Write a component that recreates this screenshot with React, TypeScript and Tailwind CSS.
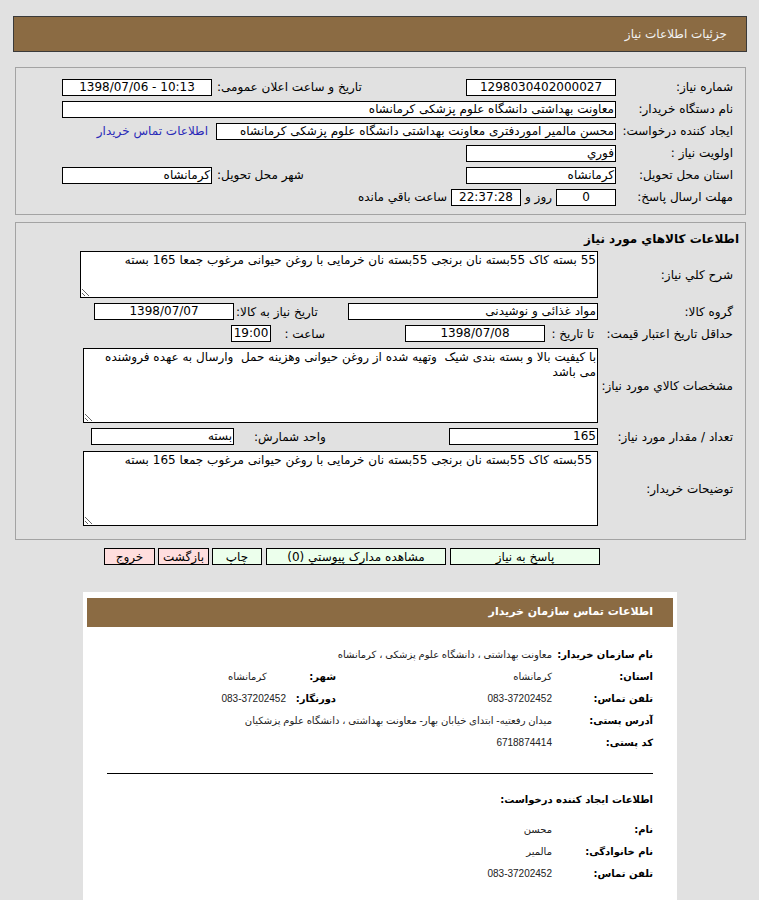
import React from "react";

function Box({
  w,
  center,
  children,
}: {
  w: string;
  center?: boolean;
  children?: React.ReactNode;
}) {
  return (
    <div
      className={`${w} h-[17px] shrink-0 border border-black bg-white flex items-center ${
        center ? "justify-center" : "justify-start"
      } px-[1px] overflow-hidden whitespace-nowrap text-[12px] leading-[15px] text-black`}
    >
      {children}
    </div>
  );
}

function Area({ w, h, text }: { w: string; h: string; text: string }) {
  return (
    <textarea
      readOnly
      defaultValue={text}
      className={`${w} ${h} shrink-0 border border-black bg-white text-[12px] leading-[15px] px-[1px] py-[1px] text-black outline-none resize-y`}
    />
  );
}

function CardRow({
  label,
  value,
  label2,
  value2,
}: {
  label: string;
  value: string;
  label2?: string;
  value2?: string;
}) {
  return (
    <div className="h-[22px] flex items-center text-[10px]">
      <div className="w-[101px] shrink-0 font-bold text-black whitespace-nowrap">{label}</div>
      <div className="w-[216px] shrink-0 text-[#222] whitespace-nowrap font-['Liberation_Sans','DejaVu_Sans',sans-serif]">
        {value}
      </div>
      {label2 && (
        <>
          <div className="w-[50px] shrink-0 font-bold text-black whitespace-nowrap">{label2}</div>
          <div className="w-[58px] shrink-0 text-left text-[#222] whitespace-nowrap font-['Liberation_Sans','DejaVu_Sans',sans-serif]">
            {value2}
          </div>
        </>
      )}
    </div>
  );
}

export default function App() {
  return (
    <div
      dir="rtl"
      className="w-[759px] min-h-[900px] bg-[#e1e1e1] pt-[16px] font-['DejaVu_Sans',sans-serif] text-[12px] text-black overflow-hidden"
    >
      {/* header */}
      <div className="mr-[12px] w-[734px] h-[36px] bg-[#8b6b43] border border-[#3a3a3a] flex items-center pr-[19px] text-[12px] text-[#f2f2f2]">
        جزئیات اطلاعات نیاز
      </div>

      {/* panel 1 */}
      <div className="mr-[13px] w-[731px] mt-[15px] border border-[#a3a3a3] pt-[8px] pb-[6px] pr-[12px]">
        <div className="h-[22px] flex items-center">
          <div className="w-[117px] shrink-0 whitespace-nowrap">شماره نیاز:</div>
          <Box w="w-[150px]" center>
            1298030402000027
          </Box>
          <div className="w-[254px] shrink-0 text-left pl-[5px] whitespace-nowrap">تاریخ و ساعت اعلان عمومی:</div>
          <Box w="w-[150px]" center>
            <span dir="ltr">1398/07/06 - 10:13</span>
          </Box>
        </div>
        <div className="h-[22px] flex items-center">
          <div className="w-[117px] shrink-0 whitespace-nowrap">نام دستگاه خریدار:</div>
          <Box w="w-[554px]">معاونت بهداشتی دانشگاه علوم پزشکی کرمانشاه</Box>
        </div>
        <div className="h-[22px] flex items-center">
          <div className="w-[117px] shrink-0 whitespace-nowrap">ایجاد کننده درخواست:</div>
          <Box w="w-[400px]">محسن مالمیر اموردفتری معاونت بهداشتی دانشگاه علوم پزشکی کرمانشاه</Box>
          <a className="mr-[8px] text-[#2a2ab8] whitespace-nowrap cursor-pointer">اطلاعات تماس خریدار</a>
        </div>
        <div className="h-[22px] flex items-center">
          <div className="w-[117px] shrink-0 whitespace-nowrap">اولویت نیاز :</div>
          <Box w="w-[150px]">فوري</Box>
        </div>
        <div className="h-[22px] flex items-center">
          <div className="w-[117px] shrink-0 whitespace-nowrap">استان محل تحویل:</div>
          <Box w="w-[150px]">کرمانشاه</Box>
          <div className="w-[254px] shrink-0 text-left pl-[5px] whitespace-nowrap">شهر محل تحویل:</div>
          <Box w="w-[150px]">کرمانشاه</Box>
        </div>
        <div className="h-[22px] flex items-center">
          <div className="w-[117px] shrink-0 whitespace-nowrap">مهلت ارسال پاسخ:</div>
          <Box w="w-[60px]" center>
            0
          </Box>
          <div className="mr-[4px] whitespace-nowrap">روز و</div>
          <div className="mr-[4px]">
            <Box w="w-[70px]" center>
              22:37:28
            </Box>
          </div>
          <div className="mr-[4px] whitespace-nowrap">ساعت باقي مانده</div>
        </div>
      </div>

      {/* panel 2 */}
      <div className="mr-[13px] w-[731px] mt-[7px] border border-[#a3a3a3] pt-[8px] pb-[13px] pr-[12px]">
        <div className="h-[16px] flex items-center -mr-[6px] font-bold whitespace-nowrap">اطلاعات كالاهاي مورد نیاز</div>
        <div className="mt-[4px] flex items-center">
          <div className="w-[135px] shrink-0 whitespace-nowrap">شرح کلي نیاز:</div>
          <Area
            w="w-[518px]"
            h="h-[47px]"
            text="55 بسته کاک 55بسته نان برنجی 55بسته نان خرمایی با روغن حیوانی مرغوب جمعا 165 بسته"
          />
        </div>
        <div className="mt-[5px] h-[17px] flex items-center">
          <div className="w-[135px] shrink-0 whitespace-nowrap">گروه کالا:</div>
          <Box w="w-[250px]">مواد غذائی و نوشیدنی</Box>
          <div className="w-[114px] shrink-0 text-left pl-[2px] whitespace-nowrap">تاریخ نیاز به کالا:</div>
          <Box w="w-[140px]" center>
            1398/07/07
          </Box>
        </div>
        <div className="mt-[5px] h-[17px] flex items-center">
          <div className="w-[135px] shrink-0 whitespace-nowrap">حداقل تاریخ اعتبار قیمت:</div>
          <div className="w-[53px] shrink-0 pr-[4px] whitespace-nowrap">تا تاریخ :</div>
          <Box w="w-[140px]" center>
            1398/07/08
          </Box>
          <div className="w-[134px] shrink-0 pr-[80px] whitespace-nowrap">ساعت :</div>
          <Box w="w-[40px]" center>
            19:00
          </Box>
        </div>
        <div className="mt-[6px] flex items-center">
          <div className="w-[135px] shrink-0 whitespace-nowrap">مشخصات کالاي مورد نیاز:</div>
          <Area
            w="w-[515px]"
            h="h-[75px]"
            text="با کیفیت بالا و بسته بندی شیک  وتهیه شده از روغن حیوانی وهزینه حمل  وارسال به عهده فروشنده می باشد"
          />
        </div>
        <div className="mt-[5px] h-[17px] flex items-center">
          <div className="w-[135px] shrink-0 whitespace-nowrap">تعداد / مقدار مورد نیاز:</div>
          <Box w="w-[149px]">165</Box>
          <div className="w-[215px] shrink-0 text-left pl-[20px] whitespace-nowrap">واحد شمارش:</div>
          <Box w="w-[143px]">بسته</Box>
        </div>
        <div className="mt-[6px] flex items-center">
          <div className="w-[135px] shrink-0 whitespace-nowrap">توضیحات خریدار:</div>
          <Area
            w="w-[515px]"
            h="h-[75px]"
            text=" 55بسته کاک 55بسته نان برنجی 55بسته نان خرمایی با روغن حیوانی مرغوب جمعا 165 بسته"
          />
        </div>
      </div>

      {/* buttons */}
      <div className="mr-[159px] mt-[8px] flex items-center">
        <div className="w-[150px] h-[17px] border border-black bg-[#ecffec] flex items-center justify-center whitespace-nowrap">پاسخ به نیاز</div>
        <div className="mr-[4px] w-[180px] h-[17px] border border-black bg-[#ecffec] flex items-center justify-center whitespace-nowrap">مشاهده مدارک پیوستي (0)</div>
        <div className="mr-[4px] w-[50px] h-[17px] border border-black bg-[#ecffec] flex items-center justify-center whitespace-nowrap">چاپ</div>
        <div className="mr-[3px] w-[51px] h-[17px] border border-black bg-[#ffdede] flex items-center justify-center whitespace-nowrap">بازگشت</div>
        <div className="mr-[3px] w-[51px] h-[17px] border border-black bg-[#ffdede] flex items-center justify-center whitespace-nowrap">خروج</div>
      </div>

      {/* contact card */}
      <div className="mr-[82px] mt-[27px] w-[594px] bg-white pt-[6px] px-[4px] pb-[20px]">
        <div className="h-[29px] bg-[#8b6b43] flex items-center pr-[20px] text-[11px] font-bold text-white">
          اطلاعات تماس سازمان خریدار
        </div>
        <div className="pr-[20px] pl-[20px] pt-[16px]">
          <CardRow label="نام سازمان خریدار:" value="معاونت بهداشتی ، دانشگاه علوم پزشکی ، کرمانشاه" />
          <CardRow label="استان:" value="کرمانشاه" label2="شهر:" value2="کرمانشاه" />
          <CardRow label="تلفن تماس:" value="083-37202452" label2="دورنگار:" value2="083-37202452" />
          <CardRow label="آدرس پستی:" value="میدان رفعتیه- ابتدای خیابان بهار- معاونت بهداشتی ، دانشگاه علوم پزشکیان" />
          <CardRow label="کد پستی:" value="6718874414" />
          <div className="mt-[20px] h-px bg-black" />
          <div className="mt-[14px] h-[22px] flex items-center text-[10px] font-bold">اطلاعات ایجاد کننده درخواست:</div>
          <div className="mt-[8px]">
            <CardRow label="نام:" value="محسن" />
            <CardRow label="نام خانوادگی:" value="مالمیر" />
            <CardRow label="تلفن تماس:" value="083-37202452" />
          </div>
        </div>
      </div>
    </div>
  );
}
